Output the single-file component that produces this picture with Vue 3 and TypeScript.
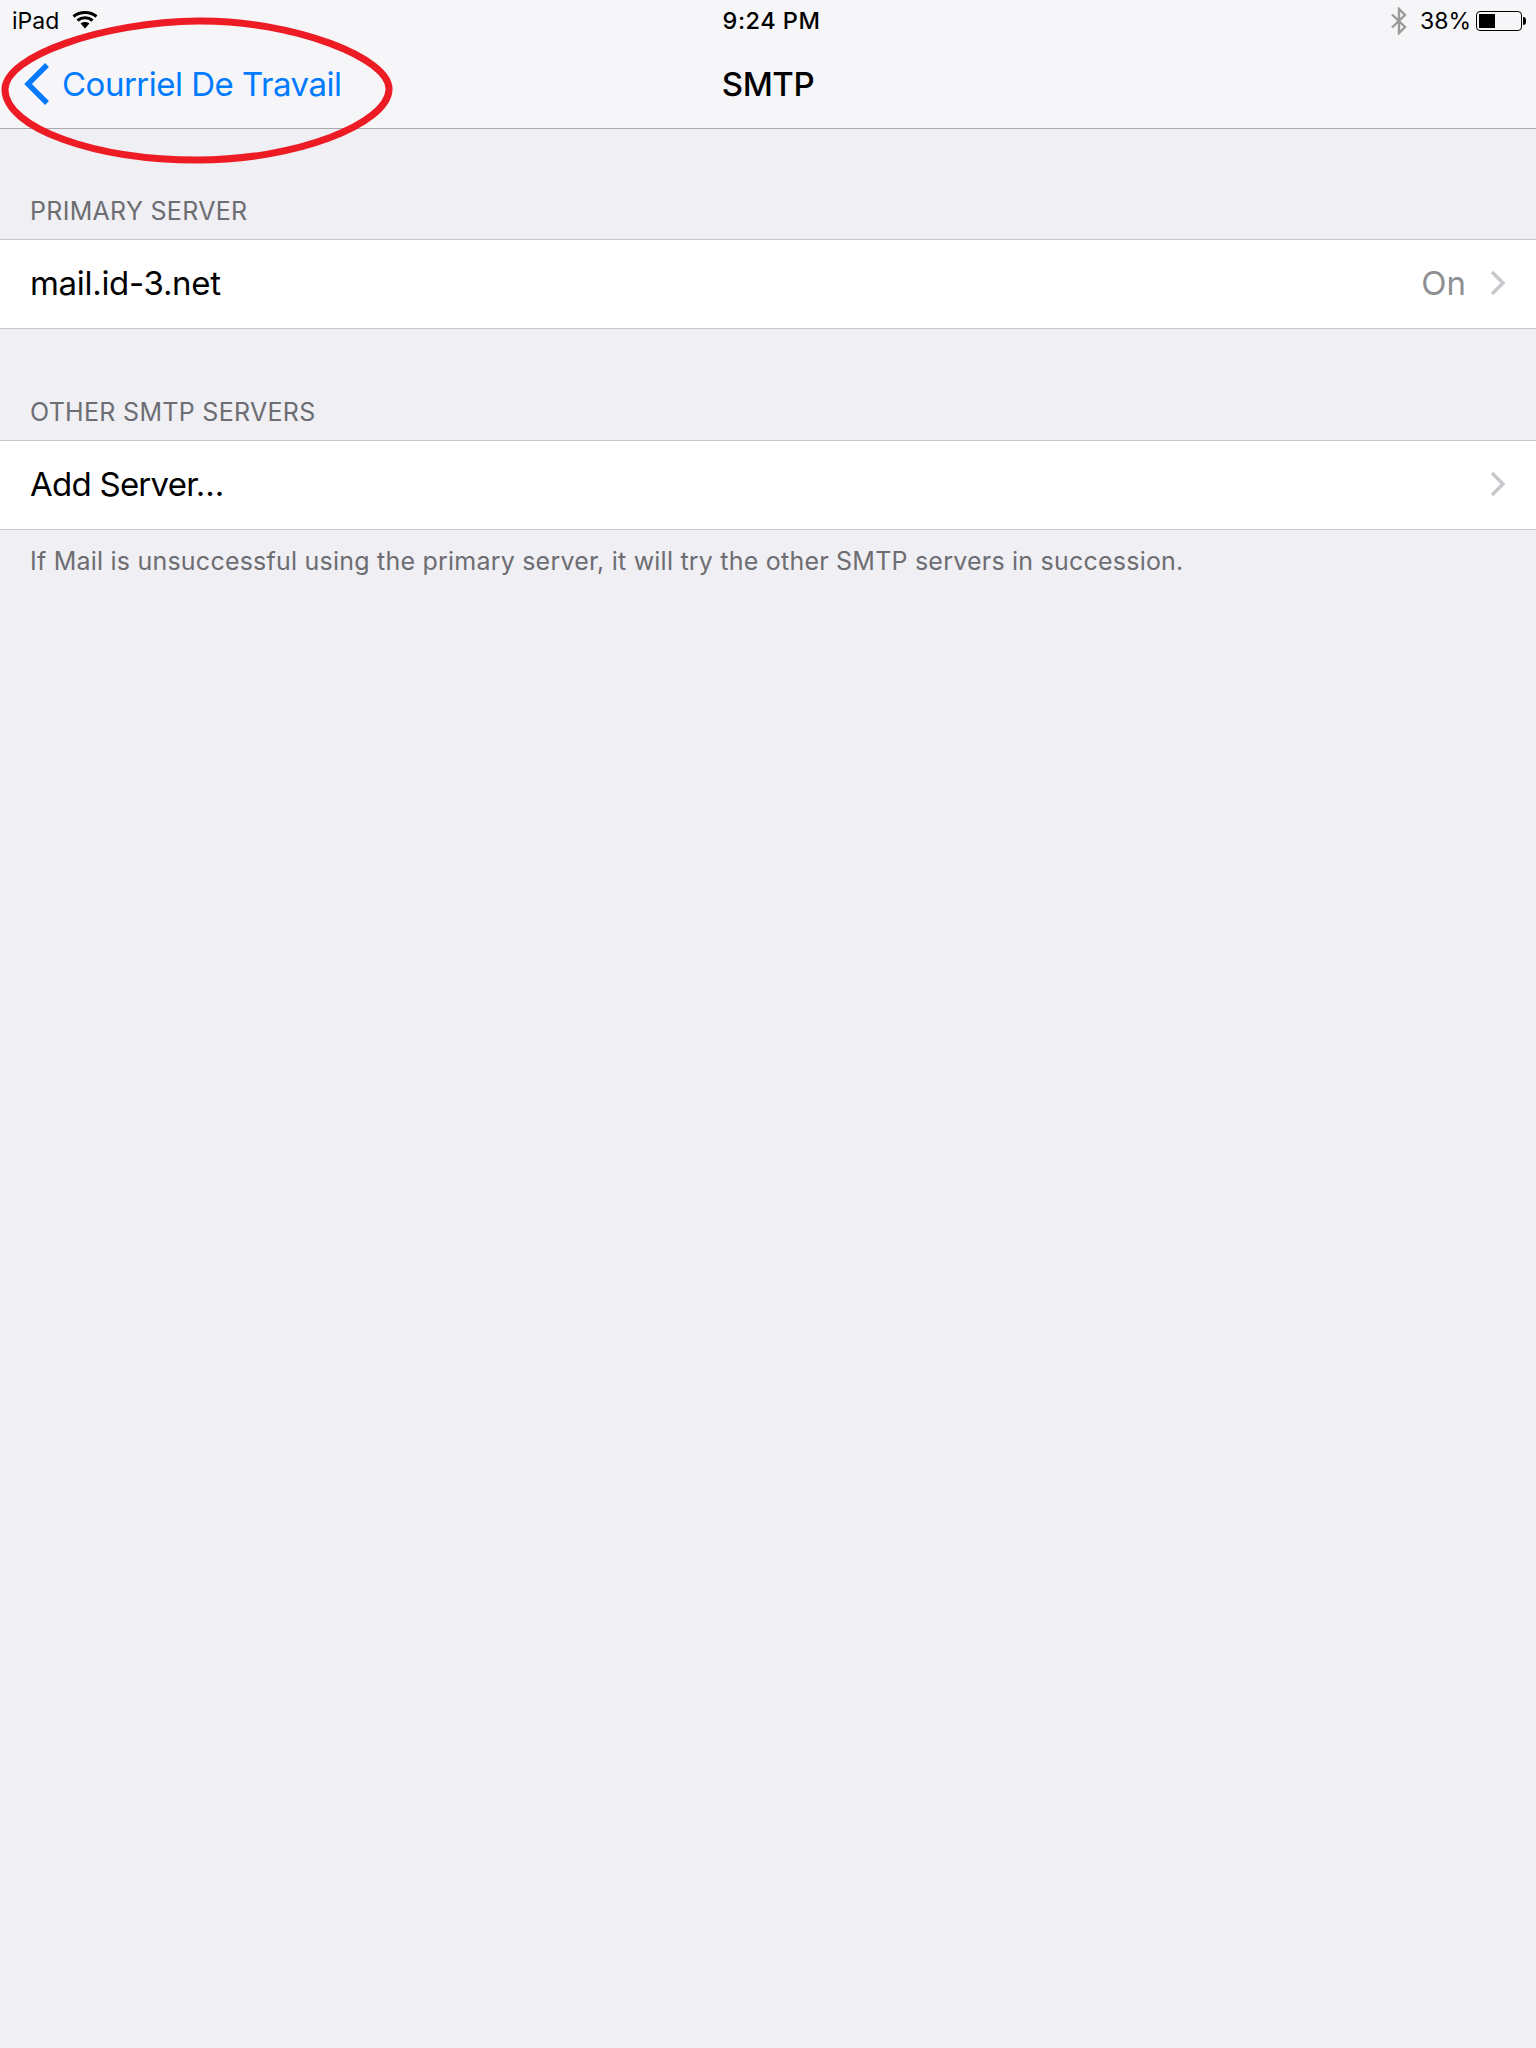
<script setup lang="ts">
interface Row { label: string; value?: string }
const primary: Row = { label: 'mail.id-3.net', value: 'On' }
const other: Row = { label: 'Add Server…' }
</script>

<template>
  <div class="page">
    <header class="bar">
      <div class="status">
        <div class="status-left">
          <span class="carrier">iPad</span>
          <svg class="wifi" width="26" height="20" viewBox="0 0 26 20">
            <path d="M1.5 6.5C7.8 1 18.2 1 24.5 6.5" fill="none" stroke="#000" stroke-width="3" />
            <path d="M5.5 10.5C9.8 6.8 16.2 6.8 20.5 10.5" fill="none" stroke="#000" stroke-width="3" />
            <path d="M8.6 13.4C11 11.4 15 11.4 17.4 13.4L13 18.5Z" fill="#000" />
          </svg>
        </div>
        <span class="clock">9:24 PM</span>
        <div class="status-right">
          <svg class="bt" width="18" height="28" viewBox="0 0 18 28">
            <path d="M2 7.5L15 20L9 26V2L15 8L2 20.5" fill="none" stroke="#9a9a9c" stroke-width="2.4" />
          </svg>
          <span class="pct">38%</span>
          <div class="battery">
            <div class="battery-body"><div class="battery-fill"></div></div>
            <div class="battery-tip"></div>
          </div>
        </div>
      </div>
      <div class="nav">
        <div class="back">
          <svg class="back-chevron" width="28" height="44" viewBox="0 0 28 44">
            <path d="M25 3L6 22L25 41" fill="none" stroke="#007aff" stroke-width="5.4" />
          </svg>
          <span class="back-label">Courriel De Travail</span>
        </div>
        <h1 class="title">SMTP</h1>
      </div>
    </header>

    <main class="content">
      <div class="section-head">PRIMARY SERVER</div>
      <div class="row">
        <span class="row-label">{{ primary.label }}</span>
        <span class="row-value">{{ primary.value }}</span>
        <svg class="chevron" width="18" height="28" viewBox="0 0 18 28">
          <path d="M3 3L14 14L3 25" fill="none" stroke="#c7c7cc" stroke-width="3.4" />
        </svg>
      </div>
      <div class="section-head second">OTHER SMTP SERVERS</div>
      <div class="row">
        <span class="row-label tight">{{ other.label }}</span>
        <svg class="chevron" width="18" height="28" viewBox="0 0 18 28">
          <path d="M3 3L14 14L3 25" fill="none" stroke="#c7c7cc" stroke-width="3.4" />
        </svg>
      </div>
      <p class="footer">If Mail is unsuccessful using the primary server, it will try the other SMTP servers in succession.</p>
    </main>

    <svg class="annotation" width="400" height="170" viewBox="0 0 400 170">
      <path d="M198 21C292 20 391 58 389 90C387 124 296 160 198 160C94 160 6 128 5 90C4 56 104 22 198 21Z" fill="none" stroke="#ed1c24" stroke-width="7" />
    </svg>
  </div>
</template>

<style scoped>
.page {
  position: relative;
  width: 1536px;
  height: 2048px;
  overflow: hidden;
  background: #efeff4;
  font-family: Inter, "Liberation Sans", sans-serif;
  color: #000;
}
.bar {
  height: 129px;
  box-sizing: border-box;
  background: #f6f6f8;
  border-bottom: 1px solid #a9a9ad;
}
.status {
  height: 41px;
  display: grid;
  grid-template-columns: 1fr auto 1fr;
  align-items: center;
  padding: 0 10px 0 12px;
  font-size: 23px;
}
.status-left {
  display: flex;
  align-items: center;
  gap: 13px;
}
.wifi { margin-top: -2px; }
.clock {
  margin-left: 5px;
  font-weight: 500;
  font-size: 23.5px;
  letter-spacing: 0.5px;
}
.status-right {
  display: flex;
  align-items: center;
  justify-content: flex-end;
  gap: 14px;
}
.battery {
  display: flex;
  align-items: center;
  gap: 1px;
}
.battery-body {
  width: 46px;
  height: 20px;
  box-sizing: border-box;
  border: 1.5px solid #000;
  border-radius: 4px;
  padding: 2px;
}
.battery-fill {
  width: 16px;
  height: 100%;
  background: #000;
}
.battery-tip {
  width: 3px;
  height: 8px;
  background: #000;
  border-radius: 0 3px 3px 0;
}
.bt { margin-right: -2px; }
.pct { margin-right: -9px; }
.nav {
  position: relative;
  height: 87px;
  box-sizing: border-box;
  padding-bottom: 2px;
  display: flex;
  align-items: center;
  justify-content: center;
}
.back {
  position: absolute;
  left: 22px;
  top: 0;
  bottom: 2px;
  display: flex;
  align-items: center;
  gap: 12px;
  color: #007aff;
}
.back-label { font-size: 33px; letter-spacing: -0.5px; }
.title {
  margin: 0;
  font-size: 33px;
  font-weight: 500;
  letter-spacing: -0.4px;
}
.content { display: flex; flex-direction: column; }
.section-head {
  height: 110px;
  box-sizing: border-box;
  padding: 66px 30px 0;
  font-size: 25px;
  letter-spacing: 0.3px;
  color: #6d6d72;
  line-height: 32px;
}
.section-head.second {
  height: 111px;
  padding-top: 67px;
}
.row {
  height: 90px;
  box-sizing: border-box;
  display: flex;
  align-items: center;
  padding: 0 29px 2px 30px;
  background: #fff;
  border-top: 1px solid #c8c7cc;
  border-bottom: 1px solid #c8c7cc;
}
.row-label {
  flex: 1;
  font-size: 33px;
  letter-spacing: -0.3px;
}
.row-label.tight { letter-spacing: -0.75px; }
.row-value {
  font-size: 33px;
  color: #8e8e93;
  margin-right: 23px;
}
.footer {
  margin: 0;
  padding: 14px 30px 0;
  font-size: 25px;
  letter-spacing: 0.22px;
  line-height: 34px;
  color: #6d6d72;
}
.annotation {
  position: absolute;
  left: 0;
  top: 0;
}
</style>
